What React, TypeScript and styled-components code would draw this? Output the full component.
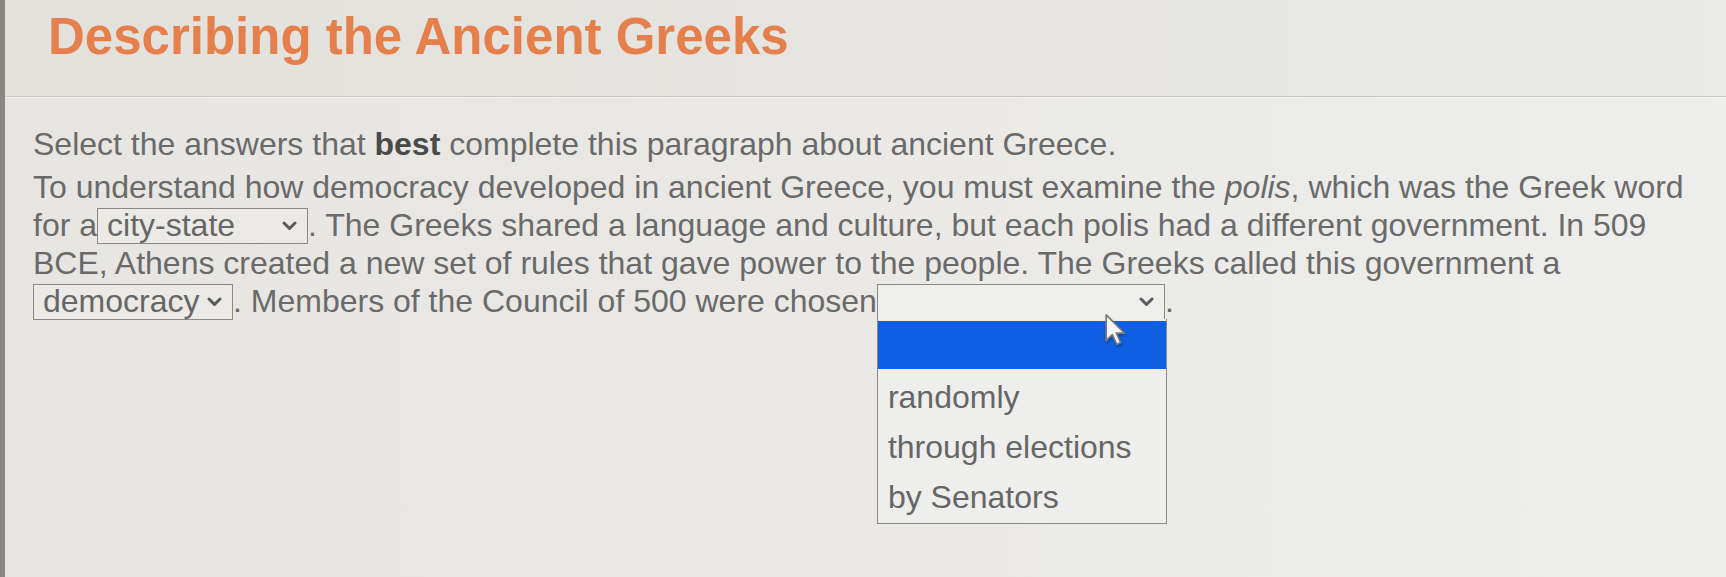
import styled, { createGlobalStyle } from "styled-components";

const GlobalStyle = createGlobalStyle`
  html, body {
    margin: 0;
    padding: 0;
    background: #e9e8e4;
  }
  body {
    font-family: "Liberation Sans", Arial, sans-serif;
  }
`;

const Page = styled.div`
  min-height: 577px;
  border-left: 5px solid #8a8783;
  background: linear-gradient(90deg, #e7e5e1 0%, #eae9e6 50%, #eeeeec 100%);
`;

const Header = styled.header`
  height: 85px;
  padding: 11px 0 0 43px;
  box-sizing: content-box;
  background: linear-gradient(90deg, #e3e1dc 0%, #e6e5e1 60%, #eaeae8 100%);
  border-bottom: 1px solid #cbc9c5;
  box-shadow: 0 1px 0 #f3f2ef;
`;

const Title = styled.h1`
  margin: 0;
  font-size: 51px;
  line-height: 51px;
  font-weight: bold;
  color: #e5804d;
`;

const Content = styled.main`
  padding: 28px 12px 0 28px;
  color: #6a6a6a;
  font-size: 32px;
  line-height: 38px;
`;

const Instruction = styled.p`
  margin: 0 0 5px;
  b {
    color: #4a4a4a;
  }
`;

const Passage = styled.p`
  margin: 0;
`;

const SelectBox = styled.span<{ $w: number; $open?: boolean }>`
  position: relative;
  display: inline-flex;
  align-items: center;
  justify-content: space-between;
  box-sizing: border-box;
  width: ${(p) => p.$w}px;
  height: 36px;
  padding: 0 10px 0 9px;
  border: 1px solid #8a8986;
  background: ${(p) => (p.$open ? "#efefed" : "#ebeae6")};
  color: #666;
  vertical-align: baseline;
`;

const SelectValue = styled.span`
  line-height: 33px;
  white-space: nowrap;
`;

const Chevron = styled.svg`
  flex: none;
  width: 15px;
  height: 10px;
`;

const OptionList = styled.ul`
  position: absolute;
  top: 100%;
  left: -1px;
  width: 290px;
  margin: 0;
  padding: 0 0 2px;
  list-style: none;
  border: 1px solid #8a8986;
  border-top: none;
  background: #eeeeec;
  box-sizing: border-box;
  z-index: 2;
`;

const OptionItem = styled.li<{ $active?: boolean }>`
  height: ${(p) => (p.$active ? 48 : 50)}px;
  margin: ${(p) => (p.$active ? "2px 0" : "0")};
  padding-left: 10px;
  line-height: 52px;
  color: #666;
  background: ${(p) => (p.$active ? "#0e5fe2" : "transparent")};
`;

const Cursor = styled.svg`
  position: absolute;
  left: 226px;
  top: 28px;
  width: 24px;
  height: 34px;
  z-index: 3;
  filter: drop-shadow(1px 2px 1px rgba(0, 0, 0, 0.25));
`;

const ChevronIcon = () => (
  <Chevron viewBox="0 0 15 10">
    <path d="M2 2 L7.5 7.5 L13 2" fill="none" stroke="#5a5a5a" strokeWidth="3" strokeLinecap="round" strokeLinejoin="round" />
  </Chevron>
);

type SelectProps = {
  width: number;
  value?: string;
  options?: string[];
  open?: boolean;
};

const InlineSelect = ({ width, value = "", options = [], open }: SelectProps) => (
  <SelectBox $w={width} $open={open}>
    <SelectValue>{value || "\u00a0"}</SelectValue>
    <ChevronIcon />
    {open && (
      <>
        <OptionList>
          <OptionItem $active>&nbsp;</OptionItem>
          {options.map((o) => (
            <OptionItem key={o}>{o}</OptionItem>
          ))}
        </OptionList>
        <Cursor viewBox="0 0 18 26">
          <path
            d="M1.5 1.5 L1.5 21 L6.2 16.6 L9.6 24 L12.6 22.6 L9.3 15.4 L15.5 15.4 Z"
            fill="#f6f6f6"
            stroke="#7a7a7a"
            strokeWidth="1.3"
            strokeLinejoin="round"
          />
        </Cursor>
      </>
    )}
  </SelectBox>
);

export default function App() {
  return (
    <>
      <GlobalStyle />
      <Page>
        <Header>
          <Title>Describing the Ancient Greeks</Title>
        </Header>
        <Content>
          <Instruction>
            Select the answers that <b>best</b> complete this paragraph about ancient Greece.
          </Instruction>
          <Passage>
            To understand how democracy developed in ancient Greece, you must examine the <i>polis</i>, which was the
            Greek word for a<InlineSelect width={211} value="city-state" />. The Greeks shared a language and culture,
            but each polis had a different government. In 509 BCE, Athens created a new set of rules that gave power to
            the people. The Greeks called this government a <InlineSelect width={200} value="democracy" />. Members of
            the Council of 500 were chosen
            <InlineSelect width={288} open options={["randomly", "through elections", "by Senators"]} />.
          </Passage>
        </Content>
      </Page>
    </>
  );
}
